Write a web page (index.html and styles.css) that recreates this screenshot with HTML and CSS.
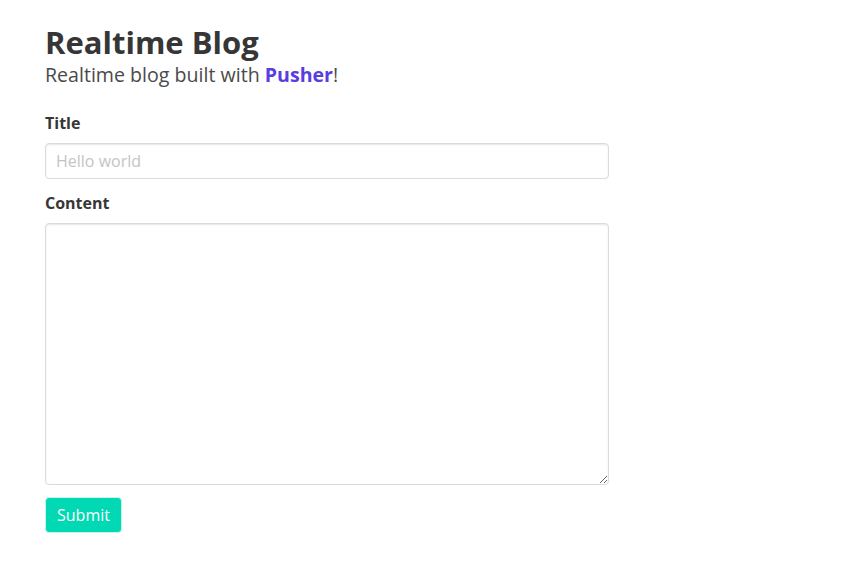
FILE: index.html
```html
<!DOCTYPE html>
<html lang="en">
<head>
<meta charset="UTF-8">
<meta name="viewport" content="width=device-width, initial-scale=1.0">
<title>Realtime Blog</title>
<link rel="stylesheet" href="styles.css">
</head>
<body>
<div class="container">
    <h1 class="title">Realtime Blog</h1>
    <h2 class="subtitle">Realtime blog built with <a href="#">Pusher</a>!</h2>

    <form class="post-form" onsubmit="return false;">
        <div class="field">
            <label class="label" for="title">Title</label>
            <input class="input" type="text" id="title" placeholder="Hello world">
        </div>
        <div class="field">
            <label class="label" for="content">Content</label>
            <textarea class="textarea" id="content"></textarea>
        </div>
        <button class="button" type="submit">Submit</button>
    </form>
</div>
</body>
</html>
```
FILE: styles.css
```css
body {
    margin: 0;
    padding: 0;
    background-color: #fff;
    color: #363636;
    font-family: "Open Sans", "Noto Sans", sans-serif;
    font-size: 16px;
    line-height: 1.5;
}

.container {
    width: 564px;
    padding: 24px 0 0 45px;
}

.title {
    margin: 0;
    font-size: 31px;
    font-weight: 700;
    line-height: 36px;
    color: #363636;
}

.subtitle {
    margin: 2px 0 24px;
    font-size: 19.6px;
    font-weight: 400;
    line-height: 25px;
    color: #4a4a4a;
}

.subtitle a {
    color: #5a3de0;
    font-weight: 700;
    text-decoration: none;
}

.field {
    margin-bottom: 12px;
}

.label {
    display: block;
    margin-bottom: 8px;
    font-weight: 700;
    line-height: 24px;
    color: #363636;
}

.input,
.textarea {
    display: block;
    box-sizing: border-box;
    width: 100%;
    margin: 0;
    border: 1px solid #dbdbdb;
    border-radius: 4px;
    box-shadow: inset 0 1px 2px rgba(10, 10, 10, 0.1);
    font-family: inherit;
    font-size: 16px;
    color: #363636;
    background-color: #fff;
}

.input {
    height: 36px;
    padding: 0 10px;
}

.textarea {
    height: 262px;
    padding: 8px 10px;
    resize: vertical;
}

.input::placeholder {
    color: #c4c4c4;
}

.button {
    height: 36px;
    padding: 0 11px;
    border: 1px solid #c6f4ec;
    border-radius: 4px;
    background-color: #00d9b4;
    color: #fff;
    font-family: inherit;
    font-size: 16px;
    cursor: pointer;
}
```
